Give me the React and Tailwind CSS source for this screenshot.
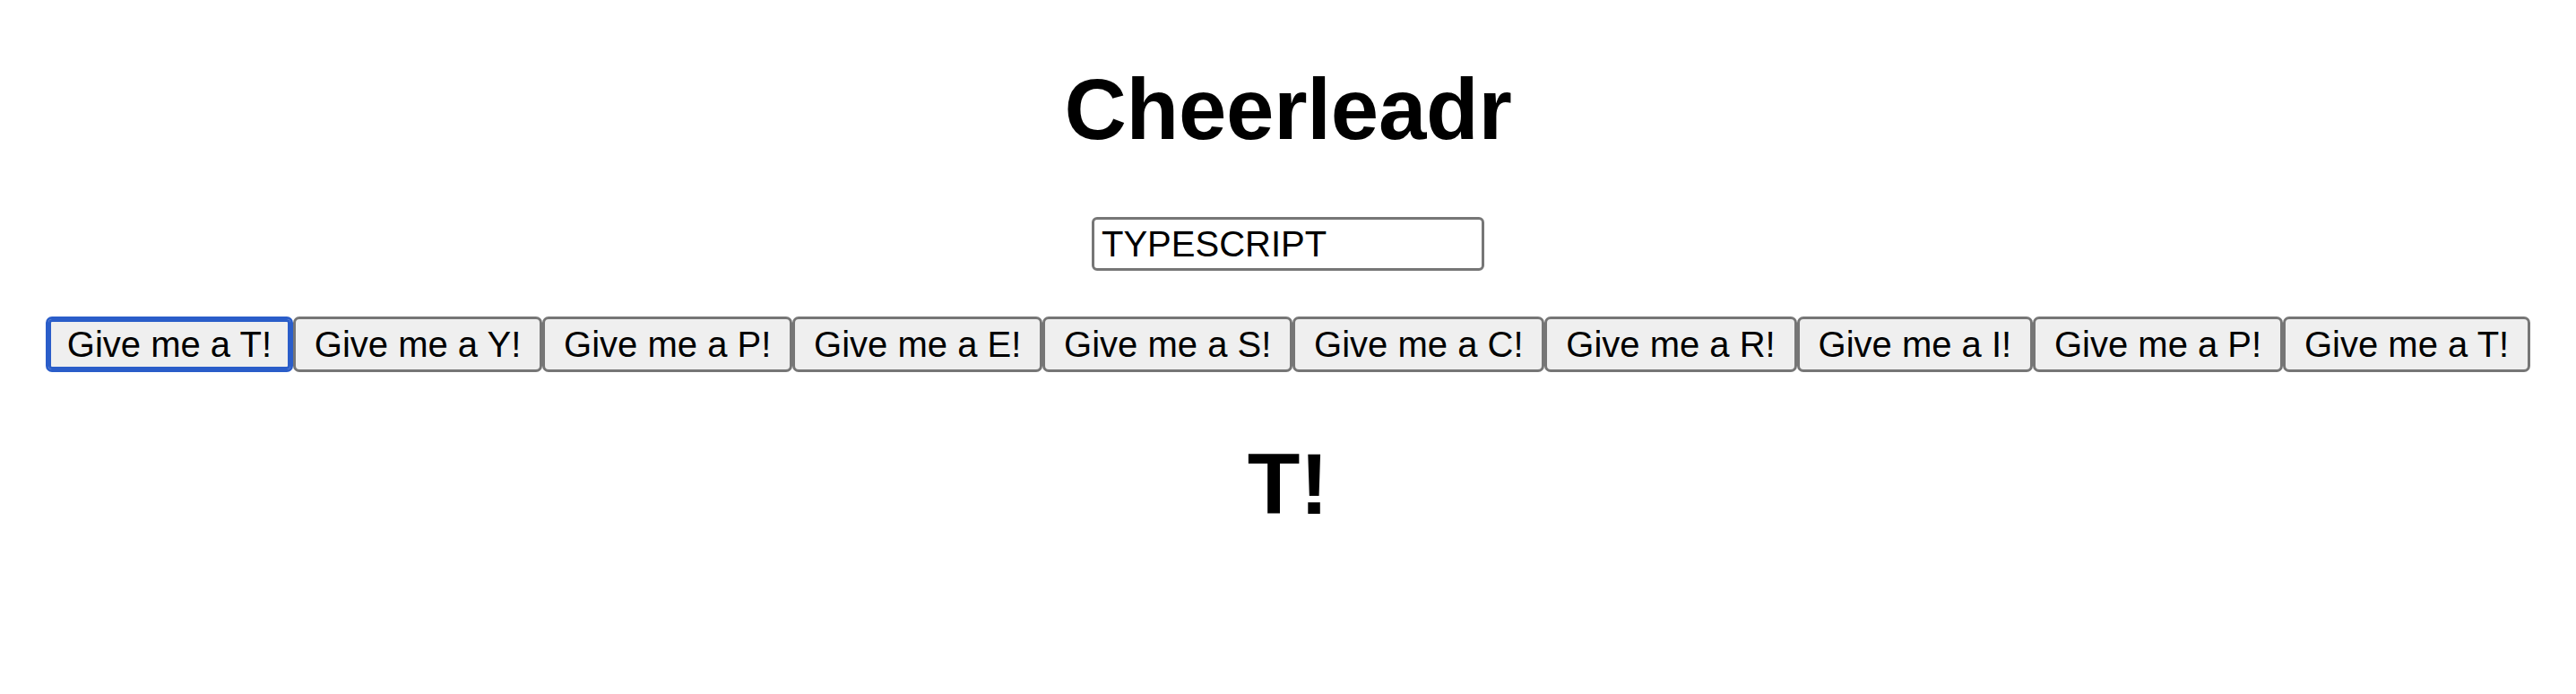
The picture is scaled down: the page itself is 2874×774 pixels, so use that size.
import React, { useState } from 'react';

const word = 'TYPESCRIPT';

export default function App() {
  const [text, setText] = useState(word);
  const [picked, setPicked] = useState(0);
  const letters = text.split('');

  return (
    <div className="min-h-screen bg-white text-black text-center font-['Liberation_Sans',Arial,sans-serif]">
      <h1 className="pt-[67px] text-[96px] leading-[110px] font-bold tracking-[-0.25px]">Cheerleadr</h1>

      <div className="mt-[65px] flex justify-center">
        <input
          value={text}
          onChange={(e) => setText(e.target.value.toUpperCase())}
          className="w-[438px] h-[60px] border-[3px] border-[#767676] rounded-[6px] pl-[8px] pr-[6px] text-[40px] leading-[46px] text-black bg-white outline-none"
        />
      </div>

      <div className="mt-[51px] flex justify-center">
        {letters.map((l, i) => (
          <button
            key={i}
            onClick={() => setPicked(i)}
            className={`h-[62px] px-[20.9px] border-[3px] rounded-[7px] bg-[#efefef] text-[40px] leading-[46px] text-black whitespace-nowrap ${
              i === 0 ? 'border-[#2a5dc9] ring-3 ring-inset ring-[#2a5dc9]' : 'border-[#767676]'
            }`}
          >
            Give me a {l}!
          </button>
        ))}
      </div>

      <h1 className="mt-[70px] text-[96px] leading-[110px] font-bold">{letters[picked] ?? ''}!</h1>
    </div>
  );
}
